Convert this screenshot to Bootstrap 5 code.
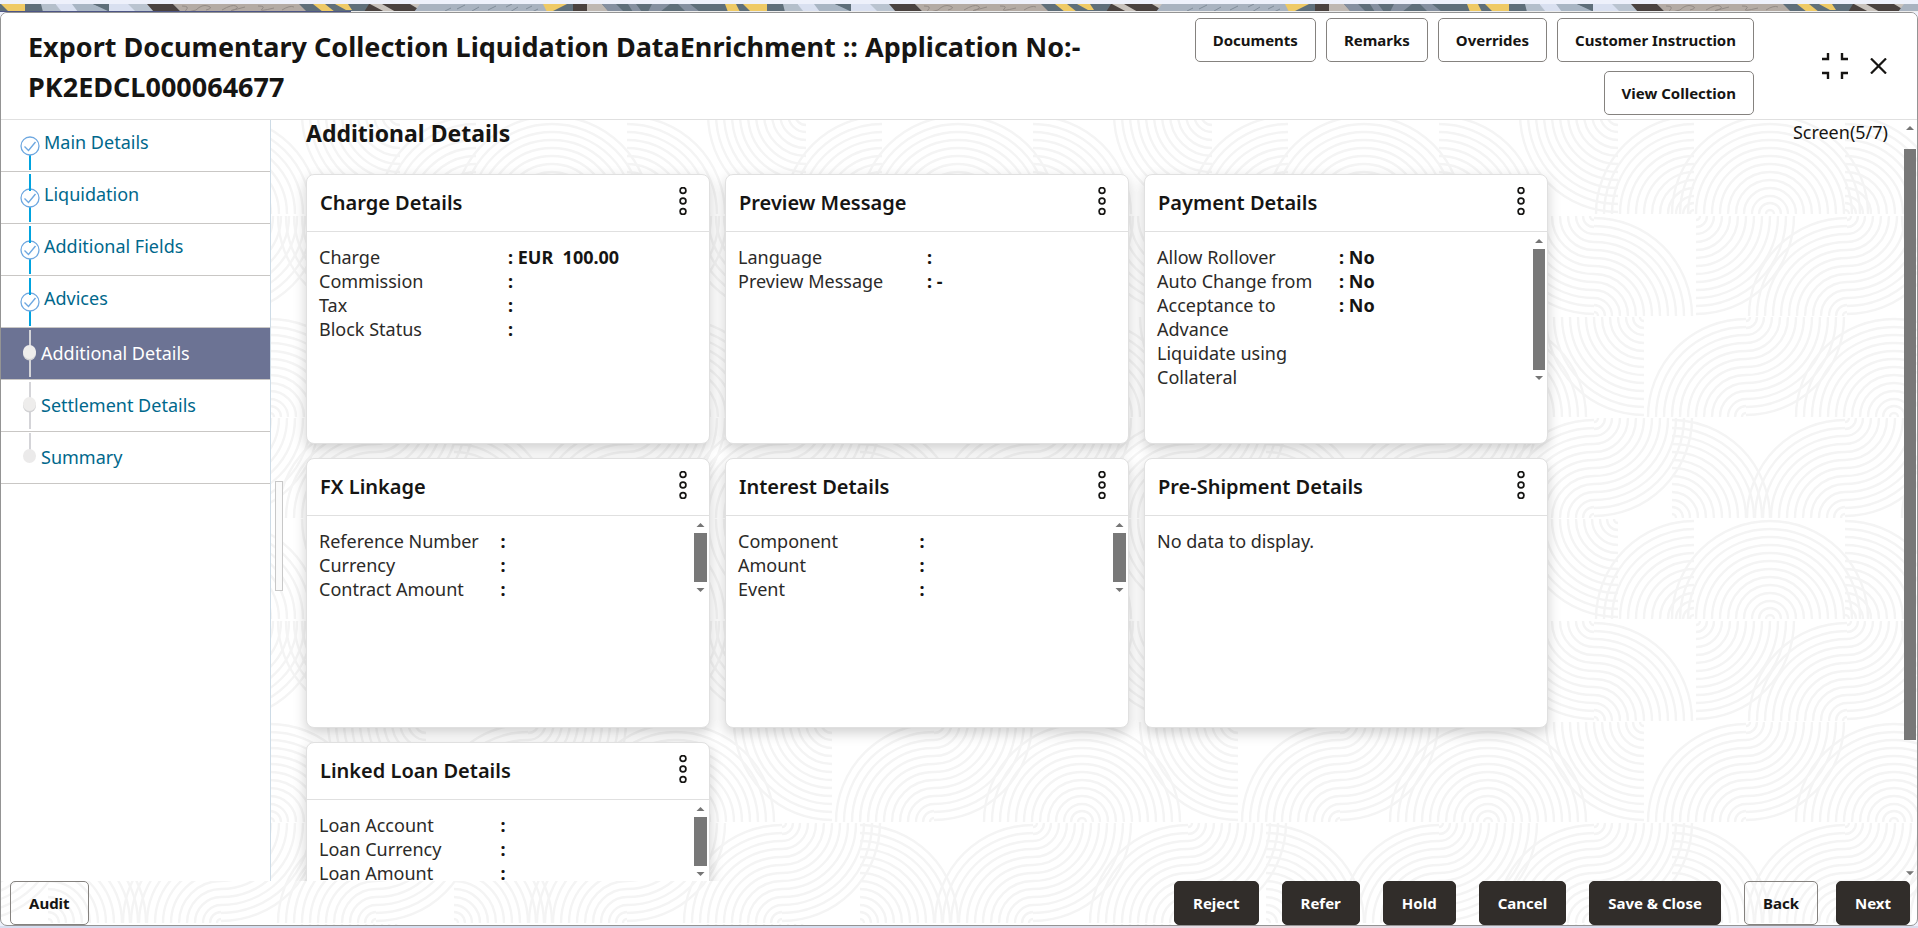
<!DOCTYPE html>
<html lang="en">
<head>
<meta charset="utf-8">
<meta name="viewport" content="width=device-width, initial-scale=1">
<title>Export Documentary Collection Liquidation</title>
<link href="https://cdn.jsdelivr.net/npm/bootstrap@5.3.0/dist/css/bootstrap.min.css" rel="stylesheet">
<style>
  :root {
    --ink: #161513;
    --edge: #e0e0e0;
    --slate: #6c7394;
    --link: #00688c;
    /* Tile of quarter-ring motifs, four rows high */
    --rings: url("data:image/svg+xml,%3Csvg xmlns='http://www.w3.org/2000/svg' width='406' height='405'%3E%3Cdefs%3E%3CclipPath id='c'%3E%3Cpath d='M0 0h100v100H0z'/%3E%3C/clipPath%3E%3Cg id='q' clip-path='url(%23c)' fill='none' stroke='%23f4f4f4' stroke-width='2.4'%3E%3Ccircle r='4'/%3E%3Ccircle r='11'/%3E%3Ccircle r='18'/%3E%3Ccircle r='26'/%3E%3Ccircle r='34'/%3E%3Ccircle r='42'/%3E%3Ccircle r='50'/%3E%3Ccircle r='58'/%3E%3Ccircle r='66'/%3E%3Ccircle r='74'/%3E%3Ccircle r='82'/%3E%3Ccircle r='90'/%3E%3Ccircle r='98'/%3E%3C/g%3E%3Cg id='rd'%3E%3Cuse href='%23q'/%3E%3C/g%3E%3Cg id='ld'%3E%3Cuse href='%23q' transform='scale(-1 1)'/%3E%3C/g%3E%3Cg id='ru'%3E%3Cuse href='%23q' transform='scale(1 -1)'/%3E%3C/g%3E%3Cg id='lu'%3E%3Cuse href='%23q' transform='scale(-1 -1)'/%3E%3C/g%3E%3C/defs%3E%3Cuse href='%23ld' x='340' y='0'/%3E%3Cuse href='%23lu' x='10' y='100'/%3E%3Cuse href='%23lu' x='416' y='100'/%3E%3Cuse href='%23lu' x='86' y='100'/%3E%3Cuse href='%23lu' x='492' y='100'/%3E%3Cuse href='%23ru' x='86' y='100'/%3E%3Cuse href='%23ru' x='161' y='100'/%3E%3Cuse href='%23ld' x='316' y='102'/%3E%3Cuse href='%23ru' x='316' y='202'/%3E%3Cuse href='%23ru' x='-90' y='202'/%3E%3Cuse href='%23rd' x='12' y='102'/%3E%3Cuse href='%23lu' x='163' y='202'/%3E%3Cuse href='%23rd' x='163' y='102'/%3E%3Cuse href='%23ld' x='366' y='203'/%3E%3Cuse href='%23lu' x='62' y='303'/%3E%3Cuse href='%23lu' x='468' y='303'/%3E%3Cuse href='%23rd' x='62' y='203'/%3E%3Cuse href='%23lu' x='210' y='303'/%3E%3Cuse href='%23ru' x='210' y='303'/%3E%3Cuse href='%23lu' x='316' y='404'/%3E%3Cuse href='%23rd' x='316' y='304'/%3E%3Cuse href='%23rd' x='-90' y='304'/%3E%3Cuse href='%23ru' x='-12' y='404'/%3E%3Cuse href='%23ru' x='394' y='404'/%3E%3Cuse href='%23lu' x='161' y='404'/%3E%3Cuse href='%23rd' x='161' y='304'/%3E%3C/svg%3E");
    --ribbon: url("data:image/svg+xml,%3Csvg xmlns='http://www.w3.org/2000/svg' width='742' height='8'%3E%3Cpath fill='%235f6f7a' d='M0 0h742v8H0z'/%3E%3Cpath fill='%23a9b3c0' d='M0 0h104l4 8H0z'/%3E%3Cpath stroke='%23808c99' d='M5 7l6-3M17 5l8-4M32 7l7-4M48 6l8-4M66 3l6-3M70 8l8-5M86 5l6-3M92 8l6-3' fill='none'/%3E%3Cpath fill='%23efca66' d='M103 0h24l-16 8h-4z'/%3E%3Cpath fill='%234a423f' d='M133 0h14v8h-14z'/%3E%3Cpath fill='%23bfb8b2' d='M147 0h15l7 8h-22z'/%3E%3Cpath fill='%238590a0' d='M162 0h14l8 8h-15zM188 0h8l6 8h-9zM212 0h18l-10 8h-12zM238 0h12l10 8h-14z'/%3E%3Cpath fill='%23efca66' d='M285 0h11l4 8h-12zM303 0h24v8h-16z'/%3E%3Cpath fill='%23b4bfcb' d='M343 0h14l8 8h-20z'/%3E%3Cpath fill='%23d9e0f0' d='M357 0h25l6 8h-24z'/%3E%3Cpath fill='%23a9b6c4' d='M374 0h21l17 8h-32z'/%3E%3Cpath fill='%235f6f7a' d='M395 0h16v6z'/%3E%3Cpath fill='%23d9e0f0' d='M411 0h21l8 8h-29z'/%3E%3Cpath fill='%23bac4d0' d='M430 0h20l8 8h-20z'/%3E%3Cpath fill='%234a423f' d='M449 0h26l8 8h-27z'/%3E%3Cpath fill='%23b4aba4' d='M475 0h126l8 8H483z'/%3E%3Cpath stroke='%23938b86' d='M484 2q8 0 4 4t10 0q6-6 12-4t-2 4M524 6q10-6 14-4t-3 4t12-3M560 2q8 0 4 3t12-1M584 6q8-5 12-3' fill='none'/%3E%3Cpath fill='%23efca66' d='M615 0h12l10 8h-12zM637 0h13l4 6h-6z'/%3E%3Cpath fill='%234a423f' d='M671 0h50l-2 8h-53z'/%3E%3Cpath fill='%23c9c3bd' d='M672 0h12l14 8h-11zM712 0h10v6z'/%3E%3Cpath fill='%23a9b3c0' d='M722 0h20v8h-26z'/%3E%3C/svg%3E");
  }
  body {
    font-family: "Noto Sans", "Open Sans", sans-serif;
    font-size: 18px;
    line-height: 24px;
    color: var(--ink);
    background: #eef1fb;
  }
  .ribbon-strip { height: 8px; margin-top: 4px; background: var(--ribbon) 440px 0; }
  .load-track { height: 1px; background: linear-gradient(90deg, #4d5585 18.3%, #eee 18.3%); }
  .base-line { height: 2px; background: linear-gradient(90deg, #d6def0 0 50%, #e6dbe6 60%, #ecdade 68%, #dbdcec 80%); }
  .app-window {
    min-height: 0;
    border: 1px solid #949494;
    border-radius: 7px;
    background: #fff var(--rings) 59px 101px;
  }
  .app-body { min-height: 0; }
  .app-head { padding: 5px 30px 4px 27px; border-bottom: 1px solid var(--edge); background: #fff; }
  .app-title { font-size: 27px; line-height: 40px; font-weight: 700; padding-top: 2px; }
  .head-actions { flex: 0 0 32%; gap: 9px 10px; }
  .btn-app {
    --bs-btn-font-size: 15px;
    --bs-btn-font-weight: 700;
    --bs-btn-padding-x: 17px;
    --bs-btn-padding-y: 9px;
    --bs-btn-line-height: 24px;
    --bs-btn-border-radius: 5px;
    --bs-btn-color: var(--ink);
    --bs-btn-border-color: #85827f;
    --bs-btn-hover-bg: #f1efed;
    --bs-btn-hover-border-color: #85827f;
  }
  .btn-ink {
    --bs-btn-color: #fff;
    --bs-btn-bg: #312d2a;
    --bs-btn-border-color: #312d2a;
    --bs-btn-hover-color: #fff;
    --bs-btn-hover-bg: #4a4541;
  }
  .head-tools { gap: 22px; margin-left: 68px; }
  .icon-btn { border: 0; padding: 0; background: none; line-height: 0; color: var(--ink); }
  .step-nav { flex: 0 0 270px; background: #fff; border-right: 1px solid #cddbe6; }
  .step-nav li { border-bottom: 1px solid #c9c7c5; }
  .step-nav a { display: flex; gap: 4px; height: 51px; padding-left: 19px; color: var(--link); text-decoration: none; }
  .step-nav span { padding-top: 10px; }
  .step-nav .pending { gap: 1px; }
  .step-nav .pending span { padding-top: 13px; }
  .step-nav .active { background: var(--slate); color: #fff; }
  .gutter { flex: 0 0 35px; padding: 70px 0 0 4px; }
  .grip { width: 8px; height: 110px; border: 1px solid #c8c8c8; background: #fafafa; }
  .page-title { font-size: 23px; line-height: 26px; font-weight: 700; margin-bottom: 28px; }
  .tile-grid { display: grid; grid-template-columns: repeat(3, minmax(0, 404px)); grid-auto-rows: 270px; gap: 14px 15px; }
  .tile { border: 1px solid var(--edge); border-radius: 8px; background: #fff; box-shadow: 0 5px 13px rgba(0, 0, 0, .19); }
  .tile-head { height: 57px; padding: 0 21px 0 13px; border-bottom: 1px solid var(--edge); }
  .tile-head h2 { font-size: 20px; line-height: 28px; font-weight: 600; margin: 0; }
  .tile-head .icon-btn { height: 52px; }
  .tile-text { padding: 13px 12px 0; color: #2b2a28; }
  .tile-text b { color: var(--ink); white-space: pre; }
  .scroller { width: 13px; margin: 1px 2px 0 0; display: flex; flex-direction: column; }
  .scroller::before, .scroller::after {
    content: ""; flex: none; height: 16px; background: #757575;
    clip-path: polygon(50% 6px, calc(50% + 4px) 10px, calc(50% - 4px) 10px);
  }
  .scroller::after { clip-path: polygon(50% 10px, calc(50% + 4px) 6px, calc(50% - 4px) 6px); }
  .thumb { background: #787878; height: 49px; }
  .thumb-tall { height: 121px; }
  .page-scroller { width: 12px; margin: 0 1px 0 0; }
  .rail { padding: 13px 0; }
  .rail .thumb { height: 84%; }
  .app-foot { padding: 0 7px 0 9px; }
  .app-foot .btn-app { --bs-btn-padding-x: 18px; }
  .foot-actions { gap: 23px; }
  .foot-nav { gap: 18px; }
</style>
</head>
<body class="d-flex flex-column vh-100 overflow-hidden">
<svg class="d-none" aria-hidden="true">
  <symbol id="kebab" viewBox="0 0 10 28">
    <g fill="none" stroke="#161513" stroke-width="1.7"><circle cx="5" cy="3.500" r="2.900"/><circle cx="5" cy="14" r="2.900"/><circle cx="5" cy="24.500" r="2.900"/></g>
  </symbol>
  <symbol id="done" viewBox="0 0 20 51">
    <path d="M10 35v15" stroke="#00a3df" stroke-width="2"/>
    <circle cx="10" cy="26" r="9" fill="#fff" stroke="#6fa8e0" stroke-width="1.3"/>
    <path d="M4.500 26.500l4 4 7-8.500" fill="none" stroke="#6fa8e0" stroke-width="1.400"/>
  </symbol>
  <symbol id="done-linked" viewBox="0 0 20 51">
    <use href="#done" width="20" height="51"/>
    <path d="M10 2v17" stroke="#00a3df" stroke-width="2"/>
  </symbol>
  <symbol id="todo" viewBox="0 0 20 51">
    <path d="M10 2v47" stroke="#d4d4d8" stroke-width="2"/>
    <ellipse cx="9.500" cy="25.500" rx="6.500" ry="7" fill="#d2d2d4"/>
    <ellipse cx="9.500" cy="24" rx="6.500" ry="7" fill="#eeedec"/>
  </symbol>
  <symbol id="todo-last" viewBox="0 0 20 51">
    <path d="M10 1v18" stroke="#d4d4d8" stroke-width="2"/>
    <ellipse cx="9.500" cy="24" rx="6.500" ry="7" fill="#ebeaea"/>
  </symbol>
</svg>

<div class="ribbon-strip"></div>
<div class="load-track"></div>

<div class="app-window flex-grow-1 d-flex flex-column overflow-hidden">
  <header class="app-head d-flex align-items-center">
    <h1 class="app-title flex-grow-1 mb-0">Export Documentary Collection Liquidation DataEnrichment :: Application No:- PK2EDCL000064677</h1>
    <div class="head-actions d-flex flex-wrap justify-content-end">
      <button type="button" class="btn btn-app">Documents</button>
      <button type="button" class="btn btn-app">Remarks</button>
      <button type="button" class="btn btn-app">Overrides</button>
      <button type="button" class="btn btn-app">Customer Instruction</button>
      <button type="button" class="btn btn-app">View Collection</button>
    </div>
    <div class="head-tools d-flex align-items-center">
      <button type="button" class="icon-btn" aria-label="Exit full screen">
        <svg width="26" height="26" viewBox="0 0 26 26" fill="none" stroke="currentColor" stroke-width="2.400"><path d="M0 6h6V0M20 0v6h6M0 20h6v6M20 26v-6h6"/></svg>
      </button>
      <button type="button" class="icon-btn" aria-label="Close">
        <svg width="17" height="16" viewBox="0 0 17 16" fill="none" stroke="currentColor" stroke-width="2.200"><path d="M1 .5l15 15M16 .5l-15 15"/></svg>
      </button>
    </div>
  </header>

  <div class="app-body d-flex flex-grow-1 overflow-hidden">
    <nav class="step-nav" aria-label="Steps">
      <ol class="list-unstyled mb-0">
        <li><a href="#main"><svg width="20" height="51"><use href="#done"/></svg><span>Main Details</span></a></li>
        <li><a href="#liquidation"><svg width="20" height="51"><use href="#done-linked"/></svg><span>Liquidation</span></a></li>
        <li><a href="#fields"><svg width="20" height="51"><use href="#done-linked"/></svg><span>Additional Fields</span></a></li>
        <li><a href="#advices"><svg width="20" height="51"><use href="#done-linked"/></svg><span>Advices</span></a></li>
        <li><a href="#additional" class="pending active" aria-current="step"><svg width="20" height="51"><use href="#todo"/></svg><span>Additional Details</span></a></li>
        <li><a href="#settlement" class="pending"><svg width="20" height="51"><use href="#todo"/></svg><span>Settlement Details</span></a></li>
        <li><a href="#summary" class="pending"><svg width="20" height="51"><use href="#todo-last"/></svg><span>Summary</span></a></li>
      </ol>
    </nav>
    <div class="gutter d-flex align-items-center"><div class="grip"></div></div>

    <main class="flex-grow-1">
      <div class="d-flex justify-content-between align-items-start pe-3">
        <h2 class="page-title">Additional Details</h2>
        <span>Screen(5/7)</span>
      </div>
      <div class="tile-grid">
        <section class="tile">
          <div class="tile-head d-flex align-items-center justify-content-between"><h2>Charge Details</h2><button type="button" class="icon-btn align-self-start" aria-label="Charge Details menu"><svg width="10" height="28"><use href="#kebab"/></svg></button></div>
          <div class="d-flex align-items-start">
            <div class="tile-text row gx-0 flex-grow-1">
              <div class="col-6"><div>Charge</div><div>Commission</div><div>Tax</div><div>Block Status</div></div>
              <div class="col-6 d-flex flex-column"><b>: EUR  100.00</b><b>:</b><b>:</b><b>:</b></div>
            </div>
          </div>
        </section>
        <section class="tile">
          <div class="tile-head d-flex align-items-center justify-content-between"><h2>Preview Message</h2><button type="button" class="icon-btn align-self-start" aria-label="Preview Message menu"><svg width="10" height="28"><use href="#kebab"/></svg></button></div>
          <div class="d-flex align-items-start">
            <div class="tile-text row gx-0 flex-grow-1">
              <div class="col-6"><div>Language</div><div>Preview Message</div></div>
              <div class="col-6 d-flex flex-column"><b>:</b><b>: -</b></div>
            </div>
          </div>
        </section>
        <section class="tile">
          <div class="tile-head d-flex align-items-center justify-content-between"><h2>Payment Details</h2><button type="button" class="icon-btn align-self-start" aria-label="Payment Details menu"><svg width="10" height="28"><use href="#kebab"/></svg></button></div>
          <div class="d-flex align-items-start">
            <div class="tile-text row gx-0 flex-grow-1">
              <div class="col-6 pe-2"><div>Allow Rollover</div><div>Auto Change from Acceptance to Advance</div><div>Liquidate using Collateral</div></div>
              <div class="col-6 d-flex flex-column"><b>: No</b><b>: No</b><b>: No</b></div>
            </div>
            <div class="scroller" aria-hidden="true"><div class="thumb thumb-tall"></div></div>
          </div>
        </section>
        <section class="tile">
          <div class="tile-head d-flex align-items-center justify-content-between"><h2>FX Linkage</h2><button type="button" class="icon-btn align-self-start" aria-label="FX Linkage menu"><svg width="10" height="28"><use href="#kebab"/></svg></button></div>
          <div class="d-flex align-items-start">
            <div class="tile-text row gx-0 flex-grow-1">
              <div class="col-6"><div>Reference Number</div><div>Currency</div><div>Contract Amount</div></div>
              <div class="col-6 d-flex flex-column"><b>:</b><b>:</b><b>:</b></div>
            </div>
            <div class="scroller" aria-hidden="true"><div class="thumb"></div></div>
          </div>
        </section>
        <section class="tile">
          <div class="tile-head d-flex align-items-center justify-content-between"><h2>Interest Details</h2><button type="button" class="icon-btn align-self-start" aria-label="Interest Details menu"><svg width="10" height="28"><use href="#kebab"/></svg></button></div>
          <div class="d-flex align-items-start">
            <div class="tile-text row gx-0 flex-grow-1">
              <div class="col-6"><div>Component</div><div>Amount</div><div>Event</div></div>
              <div class="col-6 d-flex flex-column"><b>:</b><b>:</b><b>:</b></div>
            </div>
            <div class="scroller" aria-hidden="true"><div class="thumb"></div></div>
          </div>
        </section>
        <section class="tile">
          <div class="tile-head d-flex align-items-center justify-content-between"><h2>Pre-Shipment Details</h2><button type="button" class="icon-btn align-self-start" aria-label="Pre-Shipment Details menu"><svg width="10" height="28"><use href="#kebab"/></svg></button></div>
          <div class="tile-text">No data to display.</div>
        </section>
        <section class="tile">
          <div class="tile-head d-flex align-items-center justify-content-between"><h2>Linked Loan Details</h2><button type="button" class="icon-btn align-self-start" aria-label="Linked Loan Details menu"><svg width="10" height="28"><use href="#kebab"/></svg></button></div>
          <div class="d-flex align-items-start">
            <div class="tile-text row gx-0 flex-grow-1">
              <div class="col-6"><div>Loan Account</div><div>Loan Currency</div><div>Loan Amount</div></div>
              <div class="col-6 d-flex flex-column"><b>:</b><b>:</b><b>:</b></div>
            </div>
            <div class="scroller" aria-hidden="true"><div class="thumb"></div></div>
          </div>
        </section>
      </div>
    </main>
    <div class="scroller page-scroller" aria-hidden="true"><div class="rail flex-grow-1"><div class="thumb"></div></div></div>
  </div>

  <footer class="app-foot d-flex justify-content-between">
    <button type="button" class="btn btn-app">Audit</button>
    <div class="foot-actions d-flex">
      <button type="button" class="btn btn-app btn-ink">Reject</button>
      <button type="button" class="btn btn-app btn-ink">Refer</button>
      <button type="button" class="btn btn-app btn-ink">Hold</button>
      <button type="button" class="btn btn-app btn-ink">Cancel</button>
      <button type="button" class="btn btn-app btn-ink">Save &amp; Close</button>
      <div class="foot-nav d-flex">
        <button type="button" class="btn btn-app">Back</button>
        <button type="button" class="btn btn-app btn-ink">Next</button>
      </div>
    </div>
  </footer>
</div>
<div class="base-line"></div>
<script src="https://cdn.jsdelivr.net/npm/bootstrap@5.3.0/dist/js/bootstrap.bundle.min.js"></script>
</body>
</html>
